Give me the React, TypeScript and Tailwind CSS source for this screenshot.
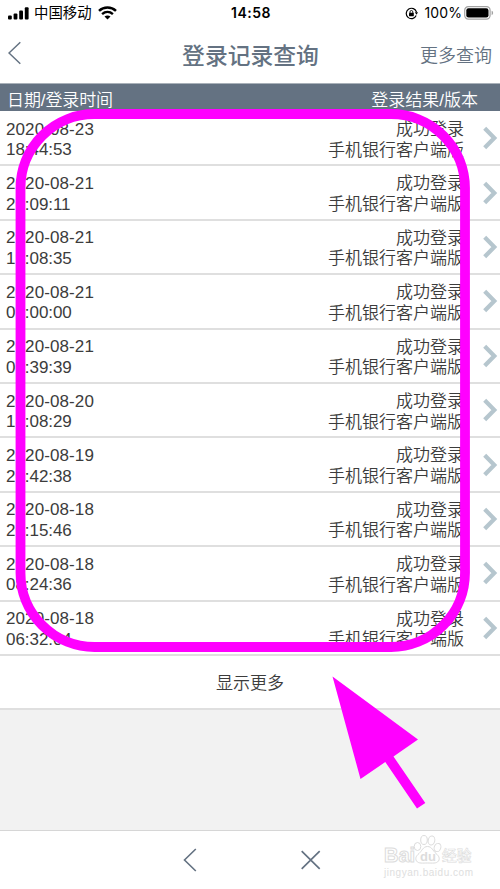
type LoginRecord = {
  date: string;
  time: string;
};

const records: LoginRecord[] = [
  { date: '2020-08-23', time: '18:44:53' },
  { date: '2020-08-21', time: '20:09:11' },
  { date: '2020-08-21', time: '19:08:35' },
  { date: '2020-08-21', time: '09:00:00' },
  { date: '2020-08-21', time: '06:39:39' },
  { date: '2020-08-20', time: '18:08:29' },
  { date: '2020-08-19', time: '20:42:38' },
  { date: '2020-08-18', time: '20:15:46' },
  { date: '2020-08-18', time: '08:24:36' },
  { date: '2020-08-18', time: '06:32:04' },
];

function StatusBar() {
  return (
    <div className="grid h-[26px] grid-cols-3 items-center pl-2 pr-[6px] text-black">
      <div className="flex items-center">
        <svg width="21" height="13" viewBox="0 0 21 13" fill="currentColor">
          <rect x="0" y="8.5" width="3.8" height="4" rx="1" />
          <rect x="5.6" y="6.5" width="3.8" height="6" rx="1" />
          <rect x="11.2" y="3.5" width="3.8" height="9" rx="1" />
          <rect x="16.8" y="0.3" width="3.8" height="12.2" rx="1" />
        </svg>
        <span className="ml-[5px] text-[14.4px] leading-none">中国移动</span>
        <svg className="ml-[6px] -mt-px" width="19" height="14" viewBox="0 0 19 14" fill="none" stroke="currentColor">
          <path d="M1 4.8C5.8.4 13.2.4 18 4.8" strokeWidth="2.5" />
          <path d="M4.1 8.1c3.2-2.9 7.6-2.9 10.8 0" strokeWidth="2.4" />
          <path d="M9.5 13.6 6.5 10.6c1.8-1.5 4.2-1.5 6 0z" fill="currentColor" stroke="none" />
        </svg>
      </div>
      <div className="text-center font-['Inter','Liberation_Sans',sans-serif] text-[14px] font-semibold leading-none tracking-[0.5px]">
        14:58
      </div>
      <div className="flex items-center justify-end">
        <svg width="13" height="13" viewBox="0 0 13 13" fill="none" stroke="currentColor">
          <path d="M11.2 8.6A5.2 5.2 0 1 1 11.5 5.2" strokeWidth="1.2" />
          <path d="M9.8 5.3h3.2l-1.5 2.4z" fill="currentColor" stroke="none" />
          <rect x="4" y="5.8" width="4.8" height="3.4" rx="0.4" fill="currentColor" stroke="none" />
          <path d="M5 6V4.9a1.4 1.4 0 0 1 2.8 0V6" strokeWidth="0.9" />
        </svg>
        <span className="ml-[6px] font-['Inter','Liberation_Sans',sans-serif] text-[14px] leading-none tracking-[0.1px]">
          100%
        </span>
        <svg className="ml-[2px]" width="30" height="14" viewBox="0 0 30 14">
          <rect x="0.7" y="0.7" width="25.4" height="12.4" rx="3.6" fill="none" stroke="#a3a3a3" strokeWidth="1.2" />
          <rect x="2.3" y="2.3" width="22.2" height="9.2" rx="2.2" fill="#000" />
          <path d="M27.6 4.8c2 .6 2 3.8 0 4.400z" fill="#a3a3a3" />
        </svg>
      </div>
    </div>
  );
}

function NavBar() {
  return (
    <div className="flex h-[57px] items-center justify-between pl-2 pr-[8px] text-[#647282]">
      <button className="w-[73px]">
        <svg className="-mt-[3px]" width="14" height="24" viewBox="0 0 14 24" fill="none" stroke="currentColor" strokeWidth="1.5">
          <path d="M12.3 1.2 1 12l11.3 10.8" />
        </svg>
      </button>
      <h1 className="pt-[4px] text-[22.8px] font-medium leading-none">登录记录查询</h1>
      <button className="pt-[3px] text-[18px] font-[350] leading-none">更多查询</button>
    </div>
  );
}

function RecordRow({ record }: { record: LoginRecord }) {
  return (
    <li className="flex h-[54.4px] items-center border-b-2 border-[#dfdfdf] pl-[6px] pr-[2px] pt-[4px] text-[17px] leading-[20.6px] text-[#3c3c3c]">
      <div className="flex-1 font-['Liberation_Sans',sans-serif]">
        <div className="tracking-[0.1px]">{record.date}</div>
        <div className="tracking-[-0.05px]">{record.time}</div>
      </div>
      <div className="pt-px text-right font-[350]">
        <div>成功登录</div>
        <div>手机银行客户端版</div>
      </div>
      <svg className="-mt-[4px] ml-[19px]" width="15" height="24" viewBox="0 0 15 24" fill="none" stroke="#b6c6ce" strokeWidth="4.2">
        <path d="M1.7 2.2 11.3 12 1.7 21.8" />
      </svg>
    </li>
  );
}

function Toolbar() {
  return (
    <div className="flex h-[59px] items-center border-t border-[#d6d6d6] bg-white pl-[183px] text-[#647282]">
      <svg className="-mt-px" width="14" height="24" viewBox="0 0 14 24" fill="none" stroke="currentColor" strokeWidth="1.6">
        <path d="M12.8 1 1.5 12l11.3 11" />
      </svg>
      <svg className="-mt-px ml-[103px]" width="21" height="20" viewBox="0 0 21 20" fill="none" stroke="currentColor" strokeWidth="1.7">
        <path d="m1.7 1.2 18 17.6M19.7 1.2l-18 17.6" />
      </svg>
    </div>
  );
}

function Watermark() {
  return (
    <svg className="absolute left-[380px] top-[832px]" width="100" height="48" viewBox="0 0 100 48">
      <g fill="#fff" stroke="#dcdcdc" strokeWidth="1">
        <text x="4" y="30" fontFamily="Liberation Sans, sans-serif" fontSize="20" fontWeight="700" textLength="31">
          Bai
        </text>
        <path d="M47.5 14.5c-4.500 0-5.500 4.500-8.500 7s-4 5-2.500 7.500c2 2.800 6.500 2 11 2s9 .8 11-2c1.500-2.500.5-5-2.500-7.500s-4-7-8.500-7z" />
        <ellipse cx="37.500" cy="14.500" rx="3.300" ry="4" />
        <ellipse cx="44" cy="8" rx="3.300" ry="4.500" />
        <ellipse cx="51.500" cy="8.500" rx="3.300" ry="4.500" transform="rotate(12 51.500 8.500)" />
        <ellipse cx="57.500" cy="15.500" rx="3.300" ry="4.200" transform="rotate(20 57.500 15.500)" />
        <text x="62" y="29" fontFamily="Noto Sans CJK SC, sans-serif" fontSize="14.8" fontWeight="500" strokeWidth="0.6">
          经验
        </text>
      </g>
      <text x="40" y="29" fontFamily="Liberation Sans, sans-serif" fontSize="13" fontWeight="700" fill="#dcdcdc">
        du
      </text>
      <text x="4" y="44" fontFamily="Liberation Sans, sans-serif" fontSize="10" fill="#dedede" textLength="89">
        jingyan.baidu.com
      </text>
    </svg>
  );
}

/**
 * Highlight frame and arrow drawn over the list
 */
function Annotation() {
  return (
    <svg className="pointer-events-none absolute left-0 top-0" width="500" height="889" viewBox="0 0 500 889">
      <rect x="20.5" y="114" width="444.5" height="533" rx="74" fill="none" stroke="#ff00ff" strokeWidth="9.8" />
      <path d="M332.5 676.5 418 739.5 393.5 756.5 425.3 803 417 808.5 385.3 762 360.5 779z" fill="#ff00ff" />
    </svg>
  );
}

export default function App() {
  return (
    <div className="relative flex h-[889px] w-[500px] flex-col overflow-hidden bg-[#f2f2f2] font-['Liberation_Sans','Noto_Sans_CJK_SC',sans-serif]">
      <header className="bg-white">
        <StatusBar />
        <NavBar />
      </header>
      <div className="flex h-[28px] items-center justify-between border-t border-[#a9b1b9] bg-[#647282] pl-[7px] pr-[22px] pt-[6px] text-[17px] font-[350] leading-none text-white">
        <span className="tracking-[-0.1px]">日期/登录时间</span>
        <span>登录结果/版本</span>
      </div>
      <ul className="bg-white pt-px">
        {records.map((record) => (
          <RecordRow key={`${record.date} ${record.time}`} record={record} />
        ))}
      </ul>
      <button className="h-[54px] border-b-2 border-[#dfdfdf] bg-white pt-[3px] text-[17px] font-[350] text-[#3c3c3c]">
        显示更多
      </button>
      <div className="flex-1" />
      <Toolbar />
      <Watermark />
      <Annotation />
    </div>
  );
}
